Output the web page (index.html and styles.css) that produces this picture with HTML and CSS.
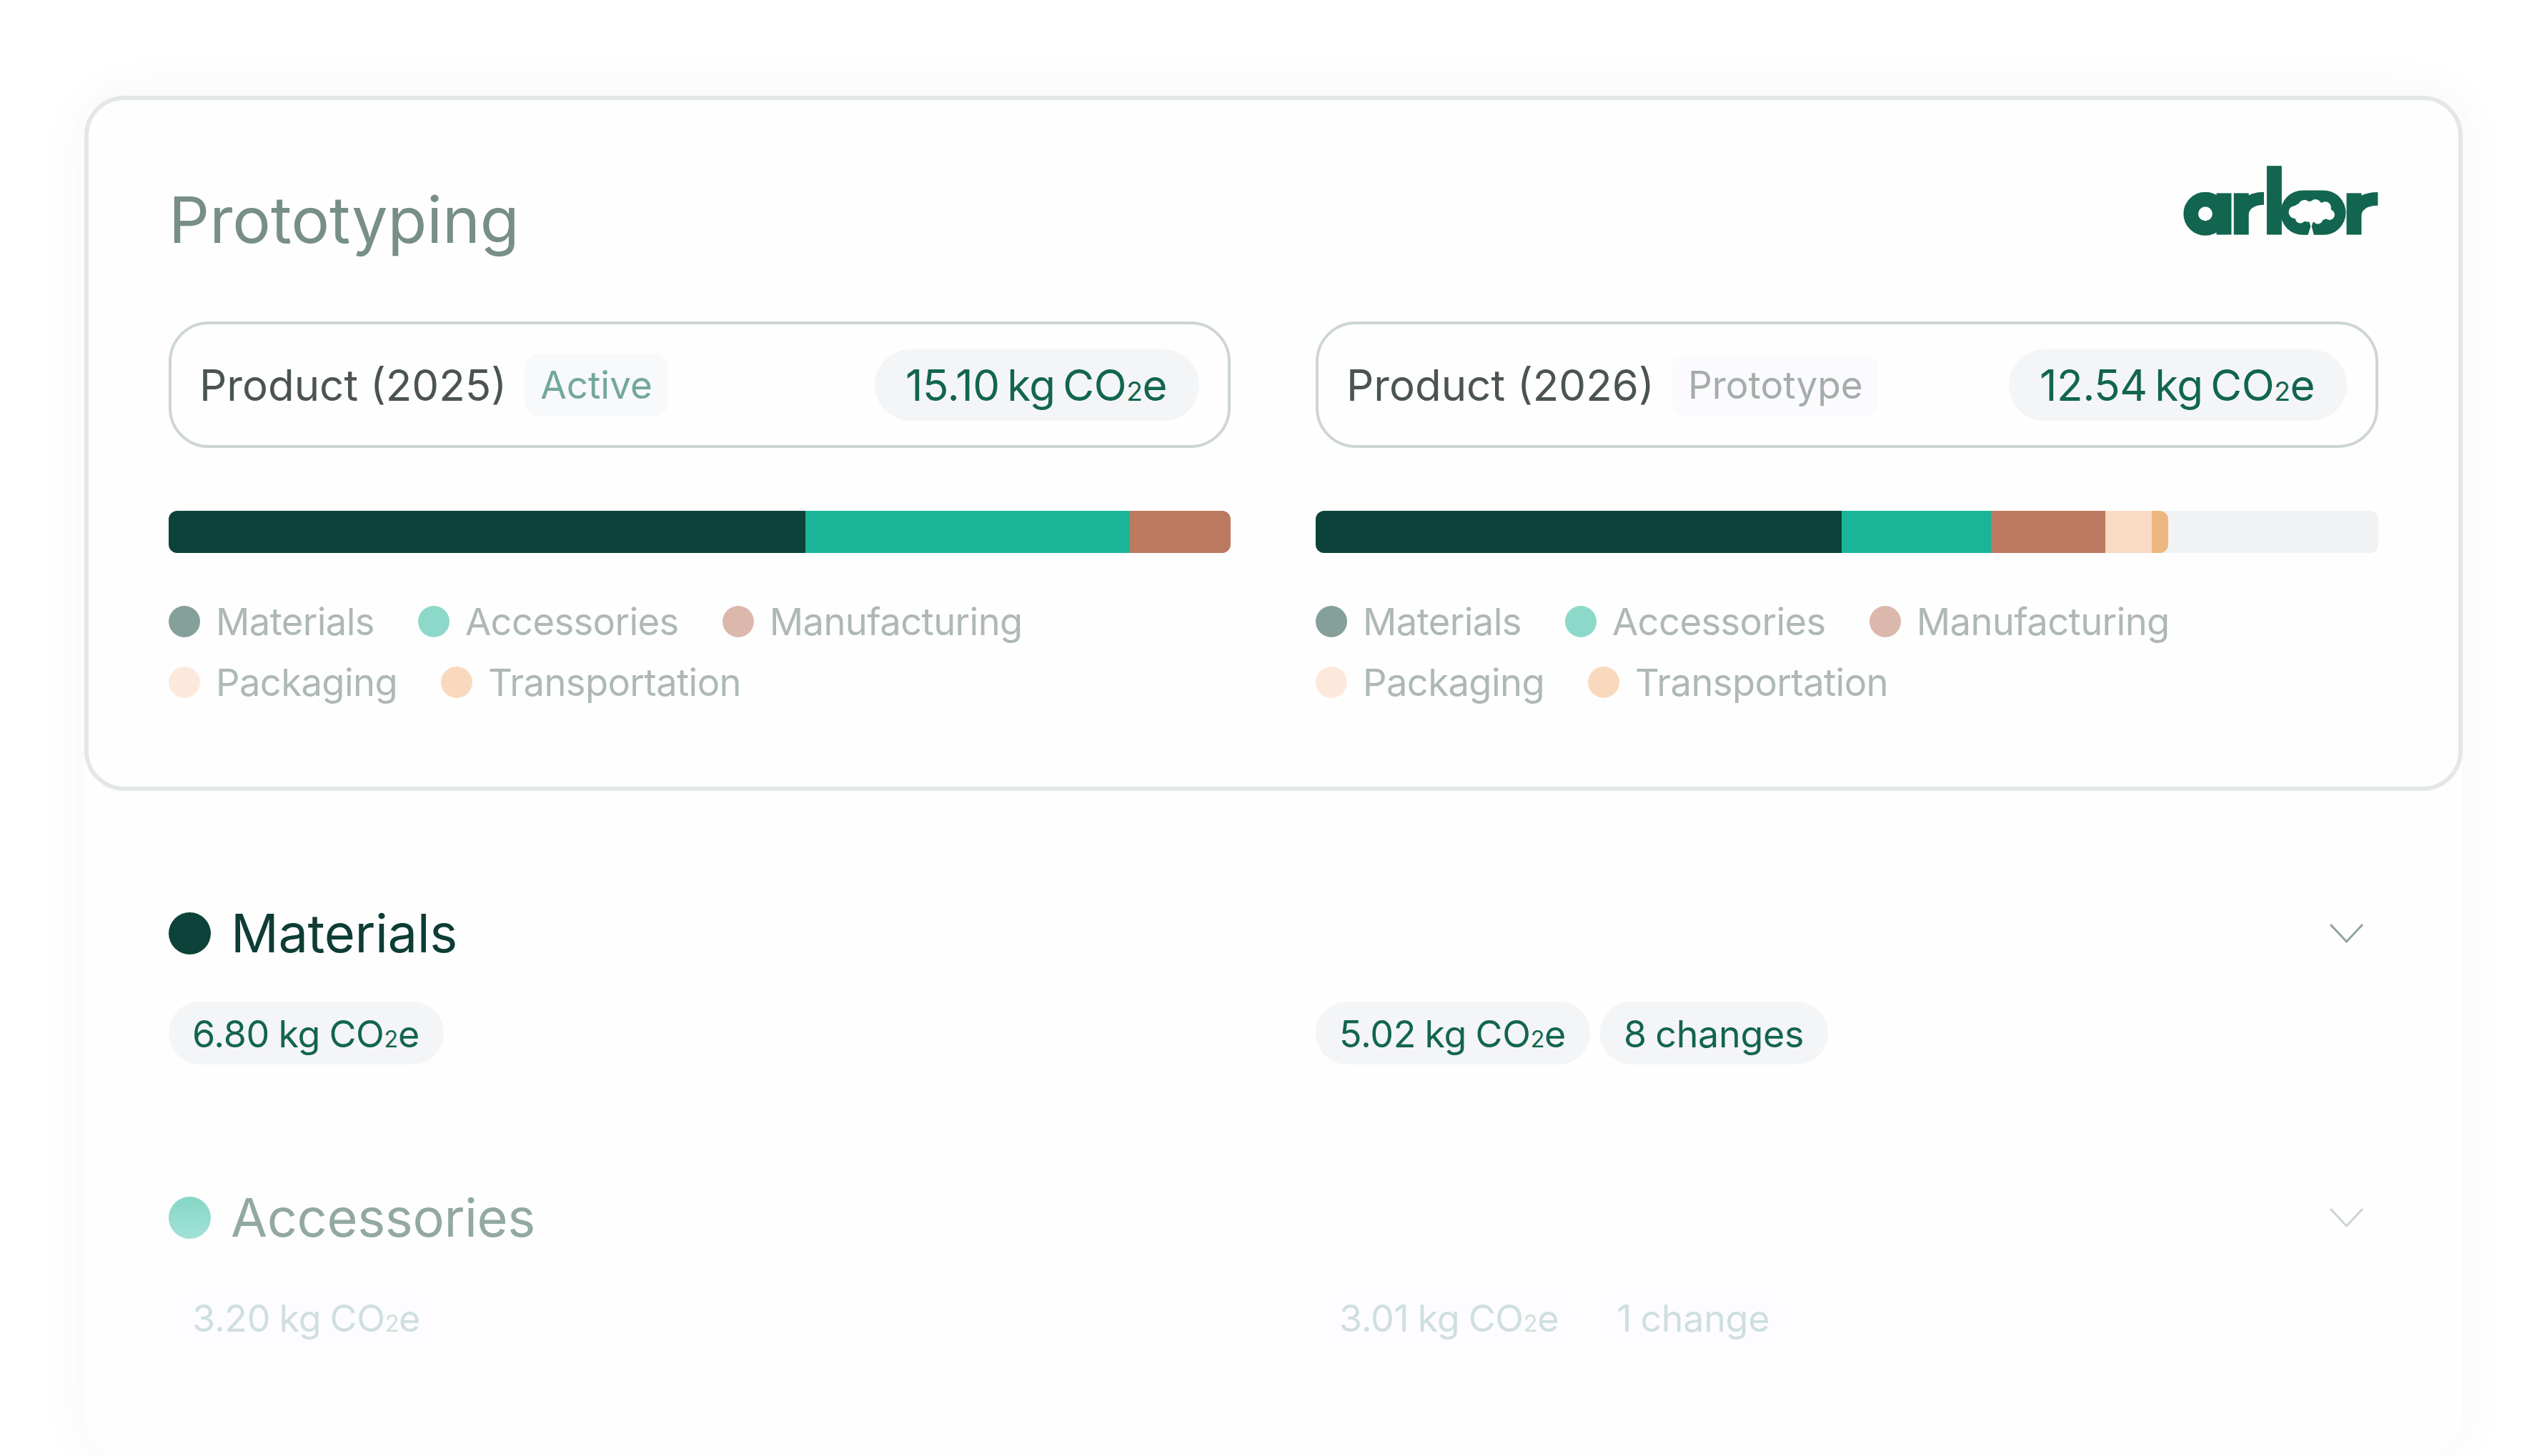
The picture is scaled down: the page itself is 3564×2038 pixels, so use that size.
FILE: index.html
```html
<!DOCTYPE html>
<html lang="en">
<head>
  <meta charset="UTF-8">
  <meta name="viewport" content="width=device-width, initial-scale=1.0">
  <title>Prototyping</title>
  <link rel="stylesheet" href="styles.css">
</head>
<body>
  <div class="panel">
    <div class="card">
      <div class="header">
        <h1>Prototyping</h1>
        <svg class="logo" viewBox="165 97 822 294" role="img" aria-label="arbor">
          <g fill="#12654f">
            <circle cx="258" cy="299" r="61" fill="none" stroke="#12654f" stroke-width="62"/>
            <rect x="305" y="212" width="63" height="175"/>
            <rect x="378" y="212" width="63" height="175"/>
            <rect x="517" y="97" width="63" height="290"/>
            <rect x="575" y="200" width="275" height="188" rx="94"/>
            <rect x="853" y="212" width="63" height="175"/>
          </g>
          <path d="M410 320 C410 262 450 234 505 234" fill="none" stroke="#12654f" stroke-width="54"/>
          <path d="M885 320 C885 262 925 236 985 236" fill="none" stroke="#12654f" stroke-width="56"/>
          <g fill="#fefefe">
            <ellipse cx="705" cy="290" rx="85" ry="44"/>
            <circle cx="636" cy="292" r="27"/>
            <circle cx="676" cy="266" r="26"/>
            <circle cx="722" cy="262" r="24"/>
            <circle cx="764" cy="272" r="24"/>
            <circle cx="781" cy="303" r="22"/>
            <circle cx="658" cy="318" r="21"/>
            <circle cx="732" cy="322" r="20"/>
            <polygon points="696,332 712,332 706,352 716,390 690,390 702,352"/>
          </g>
        </svg>
      </div>

      <div class="compare">
        <div class="product">
          <div class="product-box">
            <span class="product-name">Product (2025)</span>
            <span class="tag tag-active">Active</span>
            <span class="total">15.10 kg CO<span class="sub">2</span>e</span>
          </div>
          <div class="bar">
            <span class="seg materials" style="width: 891px"></span>
            <span class="seg accessories" style="width: 454px"></span>
            <span class="seg manufacturing" style="width: 141px"></span>
          </div>
          <ul class="legend">
            <li><i class="dot d-materials"></i>Materials</li>
            <li><i class="dot d-accessories"></i>Accessories</li>
            <li><i class="dot d-manufacturing"></i>Manufacturing</li>
            <li><i class="dot d-packaging"></i>Packaging</li>
            <li><i class="dot d-transportation"></i>Transportation</li>
          </ul>
        </div>

        <div class="product">
          <div class="product-box">
            <span class="product-name">Product (2026)</span>
            <span class="tag tag-proto">Prototype</span>
            <span class="total">12.54 kg CO<span class="sub">2</span>e</span>
          </div>
          <div class="bar">
            <span class="seg materials" style="width: 736px"></span>
            <span class="seg accessories" style="width: 209px"></span>
            <span class="seg manufacturing" style="width: 160px"></span>
            <span class="seg packaging" style="width: 65px"></span>
            <span class="seg transportation" style="width: 23px"></span>
          </div>
          <ul class="legend">
            <li><i class="dot d-materials"></i>Materials</li>
            <li><i class="dot d-accessories"></i>Accessories</li>
            <li><i class="dot d-manufacturing"></i>Manufacturing</li>
            <li><i class="dot d-packaging"></i>Packaging</li>
            <li><i class="dot d-transportation"></i>Transportation</li>
          </ul>
        </div>
      </div>
    </div>

    <div class="sections">
      <section class="section">
        <div class="section-head">
          <i class="section-dot"></i>
          <h2>Materials</h2>
          <svg class="chevron" viewBox="0 0 47 27"><path d="M1 1 L23.5 25 L46 1"/></svg>
        </div>
        <div class="pills">
          <div class="pill-group"><span class="pill">6.80 kg CO<span class="sub">2</span>e</span></div>
          <div class="pill-group">
            <span class="pill">5.02 kg CO<span class="sub">2</span>e</span>
            <span class="pill">8 changes</span>
          </div>
        </div>
      </section>

      <section class="section faded">
        <div class="section-head">
          <i class="section-dot"></i>
          <h2>Accessories</h2>
          <svg class="chevron" viewBox="0 0 47 27"><path d="M1 1 L23.5 25 L46 1"/></svg>
        </div>
        <div class="pills">
          <div class="pill-group"><span class="pill">3.20 kg CO<span class="sub">2</span>e</span></div>
          <div class="pill-group">
            <span class="pill">3.01 kg CO<span class="sub">2</span>e</span>
            <span class="pill">1 change</span>
          </div>
        </div>
      </section>
    </div>
  </div>
</body>
</html>
```

FILE: styles.css
```css
html, body {
  height: 2038px;
  overflow: hidden;
}

body {
  margin: 0;
  padding: 134px 118px 0;
  box-sizing: border-box;
  background: #ffffff;
  font-family: "Inter", "Liberation Sans", sans-serif;
}

h1, h2, ul {
  margin: 0;
  padding: 0;
  font-weight: 400;
}

.panel {
  height: 1904px;
  background: #fefefe;
  border-radius: 56px;
  box-shadow: 0 0 80px rgba(20, 70, 60, 0.04), 0 -10px 40px rgba(20, 70, 60, 0.015);
}

.card {
  height: 973px;
  box-sizing: border-box;
  padding: 92px 112px 0;
  border: 6px solid #e4e7e8;
  border-radius: 56px;
  background: #fefefe;
}

.header {
  display: flex;
  justify-content: space-between;
  align-items: flex-start;
  height: 218px;
}

h1 {
  margin-top: 23px;
  font-size: 89.5px;
  line-height: 106px;
  color: #788e88;
}

.logo {
  width: 273px;
  height: 98px;
}

.compare {
  display: grid;
  grid-template-columns: 1486px 1487px;
  column-gap: 119px;
}

.product-box {
  display: flex;
  align-items: center;
  height: 177px;
  box-sizing: border-box;
  padding: 0 40px 0 39px;
  border: 4px solid #cdd5d5;
  border-radius: 56px;
}

.product-name {
  font-size: 60px;
  color: #4b5453;
}

.tag {
  margin-left: 25px;
  padding: 0 22px;
  height: 88px;
  line-height: 88px;
  border-radius: 20px;
  font-size: 53px;
}

.tag-active {
  background: #f8f9fb;
  color: #73a898;
}

.tag-proto {
  background: #fbfafd;
  color: #a4adab;
}

.total {
  margin-left: auto;
  height: 100px;
  line-height: 100px;
  padding: 0 45px 0 43px;
  border-radius: 50px;
  background: #f4f5f7;
  color: #12654f;
  font-size: 60px;
  letter-spacing: -0.4px;
  word-spacing: -6px;
}

.sub {
  font-size: 0.62em;
}

.bar {
  display: flex;
  height: 59px;
  margin-top: 88px;
  border-radius: 12px;
  background: #f1f2f4;
  overflow: hidden;
}

.seg {
  display: block;
}

.materials { background: #0c4239; }
.accessories { background: #1ab598; }
.manufacturing { background: #bb7a5f; }
.packaging { background: #f7dbc3; }
.transportation { background: #ecb77e; border-radius: 0 12px 12px 0; }

.legend {
  display: flex;
  flex-wrap: wrap;
  gap: 17px 61px;
  margin-top: 62px;
  list-style: none;
}

.legend li {
  display: flex;
  align-items: center;
  gap: 22px;
  height: 68px;
  font-size: 52.5px;
  letter-spacing: -0.6px;
  color: #aeb8b6;
}

.dot {
  width: 44px;
  height: 44px;
  border-radius: 50%;
}

.d-materials { background: #85a09a; }
.d-accessories { background: #8dd9c9; }
.d-manufacturing { background: #dcb8ac; }
.d-packaging { background: #fde9dc; }
.d-transportation { background: #f9d9bd; }

.sections {
  padding: 170px 118px 0;
}

.section {
  margin-bottom: 185px;
}

.section-head {
  display: flex;
  align-items: center;
  height: 59px;
  margin-bottom: 66px;
}

.section-dot {
  width: 59px;
  height: 59px;
  border-radius: 50%;
  background: #0c4239;
}

h2 {
  margin-left: 28px;
  font-size: 74px;
  line-height: 59px;
  letter-spacing: -0.4px;
  color: #0d3d35;
}

.chevron {
  width: 47px;
  height: 27px;
  margin-left: auto;
  margin-right: 21px;
}

.chevron path {
  fill: none;
  stroke: #8fa5a0;
  stroke-width: 3;
}

.pills {
  display: grid;
  grid-template-columns: 1486px 1487px;
  column-gap: 119px;
}

.pill-group {
  display: flex;
  gap: 14px;
}

.pill {
  height: 88px;
  line-height: 92px;
  padding: 0 34px 0 33px;
  border-radius: 44px;
  background: #f4f5f7;
  color: #12654f;
  font-size: 52px;
  letter-spacing: -0.3px;
  word-spacing: -2px;
}

.faded .section-dot {
  background: linear-gradient(#86d6c6, #a0e2d6);
}

.faded h2 {
  color: #93a8a3;
}

.faded .chevron path {
  stroke: #c9d5d2;
}

.faded .pill {
  background: #fdfcfe;
  color: #cfe0dc;
}
```
